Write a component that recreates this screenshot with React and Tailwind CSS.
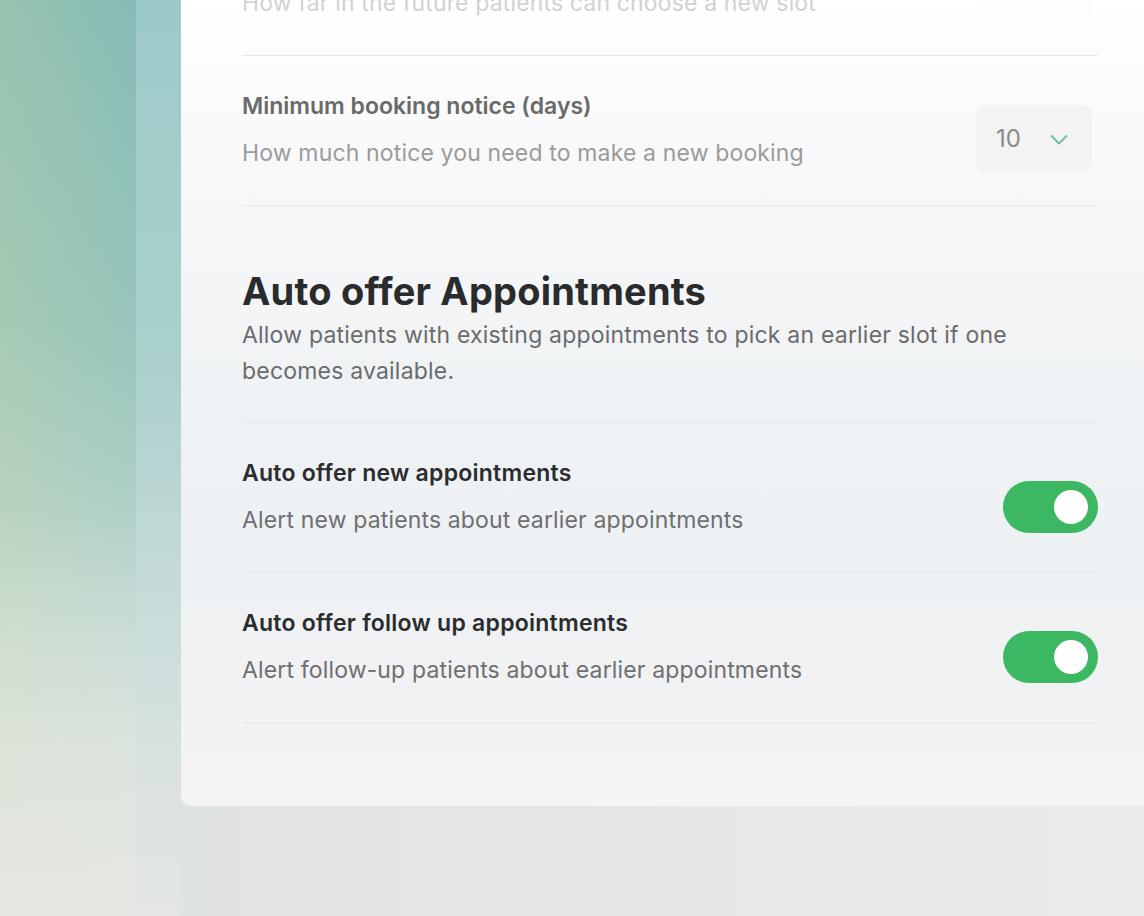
import React from "react";

const rows = [
    {
        title: "How far in the future patients can choose a new slot",
        hint: "How far in the future patients can choose a new slot",
        value: "30",
    },
    {
        title: "Minimum booking notice (days)",
        hint: "How much notice you need to make a new booking",
        value: "10",
    },
];

const toggles = [
    {title: "Auto offer new appointments", hint: "Alert new patients about earlier appointments"},
    {title: "Auto offer follow up appointments", hint: "Alert follow-up patients about earlier appointments"},
];

function Chevron() {
    return (
        <svg width="24" height="24" viewBox="0 0 24 24" fill="none" aria-hidden="true">
            <path d="M4.5 9 12 16.5 19.5 9" stroke="#6cc29a" strokeWidth="2" strokeLinecap="round" strokeLinejoin="round"/>
        </svg>
    );
}

function Select({value, faded}) {
    return (
        <div className={`mr-[6px] flex h-[67px] w-[116px] translate-y-[9px] items-center rounded-lg pl-[20px] pr-[21px] ${faded ? "bg-[#fdfdfd]" : "bg-[#f3f3f3]"}`}>
            <span className={`text-[24px] leading-none ${faded ? "text-[#e4e4e4]" : "text-[#8a8a8a]"}`}>{value}</span>
            <span className="ml-auto flex items-center">
                <Chevron/>
            </span>
        </div>
    );
}

function Toggle() {
    return (
        <div className="flex h-[52px] w-[95px] translate-y-[10px] items-center justify-end rounded-full bg-[#3db862] pr-[10px]">
            <div className="h-[34px] w-[34px] rounded-full bg-white"/>
        </div>
    );
}

function SettingRow({title, hint, control, titleClass, hintClass, titleTrack = "tracking-[0.1px]"}) {
    return (
        <div className="flex items-center justify-between border-b border-[#e6e7e8] pt-[35px] pb-[37px]">
            <div>
                <div className={`text-[23px] leading-[30px] font-semibold ${titleTrack} ${titleClass}`}>{title}</div>
                <div className={`mt-[17px] text-[23px] leading-[30px] tracking-[0.15px] ${hintClass}`}>{hint}</div>
            </div>
            {control}
        </div>
    );
}

export default function App() {
    return (
        <div
            className="flex h-[916px] w-[1144px] overflow-hidden"
            style={{fontFamily: "Inter, \"Liberation Sans\", sans-serif"}}
        >
            {/* backdrop behind the settings card */}
            <div className="w-[136px] bg-[linear-gradient(180deg,rgba(228,231,224,0)_55%,rgba(228,231,224,0.6)_80%,rgba(229,231,226,1)_100%),linear-gradient(90deg,rgba(185,208,160,0.3)_0%,rgba(110,175,185,0.12)_100%),linear-gradient(180deg,#89bdb6_0%,#9dc8bc_35%,#c2dad1_65%,#dbe4de_85%,#e6e8e1_100%)]"/>
            <div className="w-[45px] bg-[linear-gradient(180deg,#9ccac9_0%,#abd0cd_40%,#c9dddb_68%,#dce3e1_87%,#e3e6e3_100%)]"/>
            <div className="flex flex-1 flex-col bg-[linear-gradient(90deg,#dfe3e1_0%,#e7e6e7_40%,#ece9e9_100%)]">
                <div className="h-[806px] overflow-hidden rounded-bl-[10px] bg-[linear-gradient(180deg,#ffffff_0%,#f7f8f9_22%,#eff2f4_50%,#eef1f3_72%,#f4f3f5_100%)] pl-[61px] pr-[46px]">
                    <div className="-mt-[94px]">
                        <SettingRow
                            title={rows[0].title}
                            hint={rows[0].hint}
                            titleClass="text-[#e4e4e4]"
                            hintClass="text-[#d2d2d2]"
                            control={<Select value={rows[0].value} faded/>}
                        />
                        <SettingRow
                            title={rows[1].title}
                            hint={rows[1].hint}
                            titleClass="text-[#6a6a6a]"
                            hintClass="text-[#9b9b9b]"
                            titleTrack="tracking-[0px]"
                            control={<Select value={rows[1].value}/>}
                        />

                        <div className="border-b border-[#e6e7e8] pt-[62px] pb-[33px]">
                            <h2 className="text-[38px] leading-[46px] font-bold tracking-[0.2px] text-[#2a2b2c]">
                                Auto offer Appointments
                            </h2>
                            <p className="mt-[3px] max-w-[790px] text-[23px] leading-[36px] tracking-[0.2px] text-[#6a6b6c]">
                                Allow patients with existing appointments to pick an earlier slot if one becomes available.
                            </p>
                        </div>

                        {toggles.map((t) => (
                            <SettingRow
                                key={t.title}
                                title={t.title}
                                hint={t.hint}
                                titleClass="text-[#2b2c2d]"
                                hintClass="text-[#6e6f70]"
                                titleTrack="tracking-[0.25px]"
                                control={<Toggle/>}
                            />
                        ))}
                    </div>
                </div>
            </div>
        </div>
    );
}
